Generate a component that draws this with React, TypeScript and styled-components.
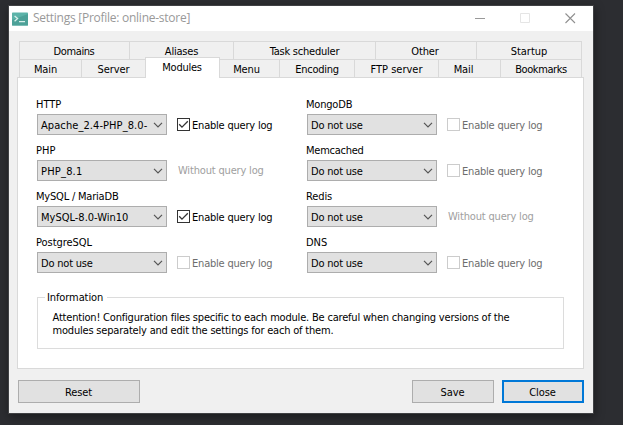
import React from "react";
import styled, { createGlobalStyle } from "styled-components";

const GlobalStyle = createGlobalStyle`
  * { box-sizing: border-box; }
  body {
    margin: 0;
    background: #2c2d31;
    font: 11px/13px "DejaVu Sans Condensed", "DejaVu Sans", sans-serif;
    color: #000;
    overflow: hidden;
  }
`;

const Desktop = styled.div`
  width: 623px;
  height: 425px;
  padding: 5px 0 0 8px;
  background: #2c2d31;
  overflow: hidden;
`;

const Window = styled.main`
  width: 586px;
  height: 409px;
  display: flex;
  flex-direction: column;
  border: 1px solid #404144;
  background: #f0f0f0;
  box-shadow: 1px 3px 9px rgba(0, 0, 0, 0.38);
`;

const TitleBar = styled.header`
  height: 25px;
  flex: none;
  display: flex;
  align-items: center;
  padding-left: 3px;
  background: #fff;
`;

const Title = styled.h1`
  flex: 1;
  margin: -1px 0 0 5px;
  font: 400 12px/16px "Open Sans", sans-serif;
  letter-spacing: -0.26px;
  color: #999;
  white-space: nowrap;
`;

const WindowControls = styled.div`
  display: flex;
  gap: 34px;
  padding-right: 17px;
`;

const Body = styled.div`
  flex: 1;
  padding: 10px 9px 0 8px;
`;

const TabRow = styled.div`
  display: flex;
  height: 18px;
  margin: 0 2px;
  align-items: stretch;
  border-left: 1px solid #d9d9d9;
`;

const Tab = styled.div<{ $width: number; $spacing?: number; $shift?: number }>`
  width: ${(p) => p.$width}px;
  padding-top: 3px;
  padding-right: ${(p) => p.$shift ?? 0}px;
  text-align: center;
  letter-spacing: ${(p) => p.$spacing ?? -0.15}px;
  white-space: nowrap;
  border-top: 1px solid #d9d9d9;
  border-right: 1px solid #d9d9d9;
`;

const ActiveTab = styled(Tab)`
  height: 21px;
  margin: -2px 0 -1px -1px;
  background: #fff;
  border-left: 1px solid #d9d9d9;
  z-index: 1;
`;

const Panel = styled.section`
  height: 292px;
  padding: 20px 19px 0;
  border: 1px solid #d9d9d9;
  background: #fff;
`;

const Modules = styled.div`
  display: grid;
  grid-template-columns: 270px 1fr;
`;

const Module = styled.div`
  height: 46px;
`;

const ModuleName = styled.div<{ $spacing?: number }>`
  height: 16px;
  margin-left: -1px;
  letter-spacing: ${(p) => p.$spacing ?? 0}px;
`;

const ModuleControls = styled.div`
  display: flex;
  align-items: center;
`;

const Dropdown = styled.div<{ $spacing?: number }>`
  width: 130px;
  height: 21px;
  flex: none;
  display: flex;
  align-items: center;
  justify-content: space-between;
  padding: 1px 3px 0 3px;
  border: 1px solid #adadad;
  background: #e1e1e1;
  letter-spacing: ${(p) => p.$spacing ?? -0.2}px;
  white-space: nowrap;
`;

const LogOption = styled.label<{ $disabled?: boolean }>`
  display: flex;
  align-items: center;
  gap: 2px;
  margin-left: 10px;
  color: ${(p) => (p.$disabled ? "#6d6d6d" : "#000")};
  white-space: nowrap;
`;

const LogText = styled.span`
  padding-top: 1px;
  letter-spacing: -0.2px;
`;

const CheckBox = styled.span<{ $disabled?: boolean }>`
  width: 13px;
  height: 13px;
  display: flex;
  border: 1px solid ${(p) => (p.$disabled ? "#ccc" : "#333")};
  background: #fff;
`;

const NoLog = styled.span`
  margin-left: 11px;
  padding-bottom: 1px;
  letter-spacing: -0.17px;
  color: #a0a0a0;
  white-space: nowrap;
`;

const Information = styled.fieldset`
  height: 58px;
  width: 527px;
  margin: 9px 0 0;
  padding: 7px 15px 0;
  border: 1px solid #dcdcdc;
`;

const Legend = styled.legend`
  margin-left: -8px;
  padding: 0 4px 0 2px;
  letter-spacing: -0.1px;
`;

const InfoText = styled.p`
  margin: 0 0 0 -0.5px;
  white-space: nowrap;
`;

const InfoLine = styled.span`
  display: block;
  letter-spacing: -0.195px;
`;

const Footer = styled.footer`
  display: flex;
  gap: 8px;
  padding: 11px 0 0 1px;
`;

const Button = styled.button<{ $width: number; $primary?: boolean }>`
  width: ${(p) => p.$width}px;
  height: 23px;
  padding: 1px 1px 0 0;
  border: ${(p) => (p.$primary ? "2px solid #0078d7" : "1px solid #adadad")};
  background: #e1e1e1;
  color: #000;
  font: inherit;
  letter-spacing: -0.1px;
`;

const ResetButton = styled(Button)`
  margin-right: auto;
`;

const AppIcon = () => (
  <svg width="16" height="14" viewBox="0 0 16 14">
    <rect width="16" height="13" rx="0.7" y="0.5" fill="#5cb3a9" />
    <path d="M0 13V8L16 2v11.5H0z" fill="#4da198" />
    <path d="M2.6 4 5.6 6.6 2.6 9.2M7 9.7h6" fill="none" stroke="#d8efeb" strokeWidth="1.3" />
  </svg>
);

const Chevron = () => (
  <svg width="10" height="6" viewBox="0 0 10 6">
    <path d="m1 .8 4 4 4-4" fill="none" stroke="#555" strokeWidth="1.2" />
  </svg>
);

const Check = () => (
  <svg width="11" height="11" viewBox="0 0 11 11">
    <path d="m1.2 5.2 2.8 2.9 5.8-5.9" fill="none" stroke="#333" strokeWidth="1.3" />
  </svg>
);

type Log = "on" | "disabled" | "none";
interface ModuleData {
  name: string;
  value: string;
  log: Log;
  nameSpacing?: number;
  valueSpacing?: number;
}

const modules: ModuleData[] = [
  { name: "HTTP", value: "Apache_2.4-PHP_8.0-", log: "on", valueSpacing: 0.08 },
  { name: "MongoDB", value: "Do not use", log: "disabled", nameSpacing: -0.2 },
  { name: "PHP", value: "PHP_8.1", log: "none", valueSpacing: 0.2 },
  { name: "Memcached", value: "Do not use", log: "disabled", nameSpacing: -0.25 },
  { name: "MySQL / MariaDB", value: "MySQL-8.0-Win10", log: "on", nameSpacing: -0.2, valueSpacing: 0 },
  { name: "Redis", value: "Do not use", log: "none", nameSpacing: -0.1 },
  { name: "PostgreSQL", value: "Do not use", log: "disabled", nameSpacing: -0.05 },
  { name: "DNS", value: "Do not use", log: "disabled" },
];

const ModuleField = ({ name, value, log, nameSpacing, valueSpacing }: ModuleData) => (
  <Module>
    <ModuleName $spacing={nameSpacing}>{name}</ModuleName>
    <ModuleControls>
      <Dropdown $spacing={valueSpacing}>
        <span>{value}</span>
        <Chevron />
      </Dropdown>
      {log === "none" ? (
        <NoLog>Without query log</NoLog>
      ) : (
        <LogOption $disabled={log === "disabled"}>
          <CheckBox $disabled={log === "disabled"}>{log === "on" && <Check />}</CheckBox>
          <LogText>Enable query log</LogText>
        </LogOption>
      )}
    </ModuleControls>
  </Module>
);

export default function App() {
  return (
    <Desktop>
      <GlobalStyle />
      <Window>
        <TitleBar>
          <AppIcon />
          <Title>Settings [Profile: online-store]</Title>
          <WindowControls>
            <svg width="11" height="11"><path d="M0 5.5h10" stroke="#999" /></svg>
            <svg width="11" height="11"><path d="M.5.5h9v9h-9z" fill="none" stroke="#e5e5e5" /></svg>
            <svg width="11" height="11"><path d="m.5.5 9.5 9.5m0-9.5-9.5 9.5" stroke="#909090" strokeWidth="1.1" /></svg>
          </WindowControls>
        </TitleBar>
        <Body>
          <TabRow>
            <Tab $width={110} $spacing={-0.4} $shift={1}>Domains</Tab>
            <Tab $width={104} $spacing={-0.2}>Aliases</Tab>
            <Tab $width={142} $spacing={-0.22}>Task scheduler</Tab>
            <Tab $width={101} $shift={2}>Other</Tab>
            <Tab $width={105} $spacing={0}>Startup</Tab>
          </TabRow>
          <TabRow>
            <Tab $width={62} $shift={10}>Main</Tab>
            <Tab $width={64} $spacing={-0.1}>Server</Tab>
            <ActiveTab $width={75} $spacing={-0.25} $shift={1}>Modules</ActiveTab>
            <Tab $width={60} $shift={6}>Menu</Tab>
            <Tab $width={75} $spacing={-0.25}>Encoding</Tab>
            <Tab $width={84} $spacing={0}>FTP server</Tab>
            <Tab $width={62} $shift={12}>Mail</Tab>
            <Tab $width={81} $spacing={-0.4}>Bookmarks</Tab>
          </TabRow>
          <Panel>
            <Modules>
              {modules.map((m) => <ModuleField key={m.name} {...m} />)}
            </Modules>
            <Information>
              <Legend>Information</Legend>
              <InfoText>
                <InfoLine>Attention! Configuration files specific to each module. Be careful when changing versions of the</InfoLine>
                <InfoLine>modules separately and edit the settings for each of them.</InfoLine>
              </InfoText>
            </Information>
          </Panel>
          <Footer>
            <ResetButton $width={122}>Reset</ResetButton>
            <Button $width={82}>Save</Button>
            <Button $width={82} $primary>Close</Button>
          </Footer>
        </Body>
      </Window>
    </Desktop>
  );
}
